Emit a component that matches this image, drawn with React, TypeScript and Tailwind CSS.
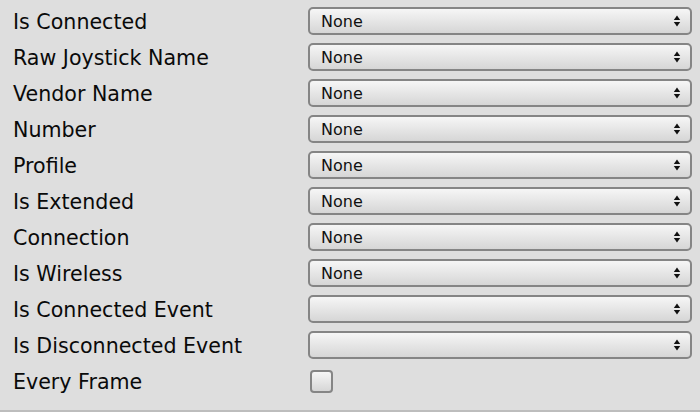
import React from 'react';

const rows: { label: string; value?: string; kind: 'select' | 'check' }[] = [
  { label: 'Is Connected', value: 'None', kind: 'select' },
  { label: 'Raw Joystick Name', value: 'None', kind: 'select' },
  { label: 'Vendor Name', value: 'None', kind: 'select' },
  { label: 'Number', value: 'None', kind: 'select' },
  { label: 'Profile', value: 'None', kind: 'select' },
  { label: 'Is Extended', value: 'None', kind: 'select' },
  { label: 'Connection', value: 'None', kind: 'select' },
  { label: 'Is Wireless', value: 'None', kind: 'select' },
  { label: 'Is Connected Event', value: '', kind: 'select' },
  { label: 'Is Disconnected Event', value: '', kind: 'select' },
  { label: 'Every Frame', kind: 'check' },
];

const Arrows = () => (
  <svg width="8" height="12" viewBox="0 0 8 12" className="shrink-0">
    <path d="M4 0.5 L7.2 5 L0.8 5 Z" fill="#111" />
    <path d="M4 11.5 L7.2 7 L0.8 7 Z" fill="#111" />
  </svg>
);

const Select = ({ value }: { value: string }) => (
  <div className="flex items-center justify-between w-[384px] h-[28px] rounded-[5px] border-2 border-[#858585] bg-gradient-to-b from-[#f6f6f6] to-[#d6d6d6] pl-[11px] pr-[9px]">
    <span className="text-[16px] text-[#111] pt-[1px]">{value}</span>
    <Arrows />
  </div>
);

export default function App() {
  return (
    <div className="w-[700px] h-[412px] bg-[#dedede] border-b-2 border-[#bdbdbd] pt-[7px] font-['DejaVu_Sans',sans-serif] overflow-hidden">
      <div className="flex flex-col gap-[8px]">
        {rows.map(r => (
          <div key={r.label} className="flex items-center h-[28px]">
            <div className="w-[308px] pl-[13px] pt-[3px] text-[20.6px] text-[#0a0a0a] leading-none whitespace-nowrap">{r.label}</div>
            {r.kind === 'select' ? (
              <Select value={r.value || ''} />
            ) : (
              <div className="ml-[2px] w-[23px] h-[23px] rounded-[4px] border-2 border-[#858585] bg-gradient-to-b from-[#f6f6f6] to-[#d6d6d6]" />
            )}
          </div>
        ))}
      </div>
    </div>
  );
}
